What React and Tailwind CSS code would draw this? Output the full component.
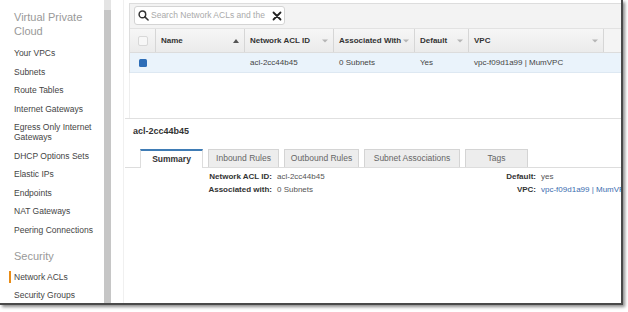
const font = { fontFamily: '"Liberation Sans", Arial, sans-serif' };

function SortArrow({ dark }) {
  return (
    <svg width="6" height="4" viewBox="0 0 6 4" className="shrink-0">
      {dark ? (
        <path d="M0 4 L3 0 L6 4 Z" fill="#555" />
      ) : (
        <path d="M0 0.5 L6 0.5 L3 3.5 Z" fill="#b5b5b5" />
      )}
    </svg>
  );
}

function HeadCell({ label, w, dark }) {
  return (
    <div className={`${w} h-full flex items-center justify-between pl-[5px] pr-[5px] border-r border-[#d6d6d6]`}>
      <span className="font-bold text-[8px] text-[#333]">{label}</span>
      <SortArrow dark={dark} />
    </div>
  );
}

const navTop = ['Your VPCs', 'Subnets', 'Route Tables', 'Internet Gateways'];
const navMid = ['DHCP Options Sets', 'Elastic IPs', 'Endpoints', 'NAT Gateways', 'Peering Connections'];

function NavItem({ children, active }) {
  return (
    <div className="relative h-[18.5px] flex items-center pl-[14px] text-[8.5px] leading-[10px] text-[#444]">
      {active && <span className="absolute left-[9px] top-[3px] w-[1.5px] h-[12px] bg-[#e98c16]" />}
      {children}
    </div>
  );
}

function Tab({ label, w, active }) {
  return active ? (
    <div className={`${w} h-[19px] flex items-center justify-center bg-white border-t-2 border-t-[#3f7cb5] border-x border-x-[#ddd] -mb-px text-[8.5px] font-bold text-[#333]`}>
      {label}
    </div>
  ) : (
    <div className={`${w} h-[18px] flex items-center justify-center bg-[#ededed] border border-[#d4d4d4] border-b-0 text-[8.5px] text-[#666]`}>
      {label}
    </div>
  );
}

export default function App() {
  return (
    <div className="w-[628px] h-[312px] bg-white overflow-hidden" style={font}>
      <div className="w-[623px] h-[305px] flex bg-white border-r-2 border-b-2 border-[#4a4a4a] shadow-[2px_2px_3px_rgba(0,0,0,0.45)] overflow-hidden">
        {/* Sidebar */}
        <aside className="w-[104px] shrink-0 flex flex-col">
          <div className="mt-[10px] pl-[14px] text-[11px] leading-[14px] text-[#999]">
            Virtual Private
            <br />
            Cloud
          </div>
          <div className="mt-[6px] flex flex-col">
            {navTop.map((n) => (
              <NavItem key={n}>{n}</NavItem>
            ))}
            <div className="h-[28.5px] flex flex-col justify-center pl-[14px] text-[8.5px] leading-[10px] text-[#444]">
              <span>Egress Only Internet</span>
              <span>Gateways</span>
            </div>
            {navMid.map((n) => (
              <NavItem key={n}>{n}</NavItem>
            ))}
          </div>
          <div className="mt-[10px] pl-[14px] text-[11px] leading-[14px] text-[#999]">Security</div>
          <div className="mt-[4.5px] flex flex-col">
            <NavItem active>Network ACLs</NavItem>
            <NavItem>Security Groups</NavItem>
          </div>
        </aside>

        {/* Scrollbar */}
        <div className="w-[7px] shrink-0 flex flex-col bg-[#c6c6c6]">
          <div className="h-[10px] bg-[#e4e4e4]" />
        </div>
        <div className="w-[18px] shrink-0 flex">
          <div className="w-[12px]" />
          <div className="w-px bg-[#f0f0f0]" />
        </div>

        {/* Main */}
        <main className="flex-1 min-w-0 flex flex-col">
          <div className="mt-[3px] border-l border-t border-[#ddd] flex flex-col">
            <div className="h-[25px] bg-[#f3f3f3] border-b border-[#e2e2e2] pl-[4px] pt-[2px]">
              <div className="w-[151px] h-[19px] bg-white border border-[#d4d4d4] rounded-[3px] flex items-center pl-[3px] pr-[2px] gap-[2px]">
                <svg width="11" height="11" viewBox="0 0 12 12" fill="none" stroke="#333" strokeWidth="1.6" className="shrink-0">
                  <circle cx="4.8" cy="4.8" r="3.6" />
                  <path d="M7.5 7.5 L11 11" strokeLinecap="round" />
                </svg>
                <span className="flex-1 text-[8.5px] text-[#aaa] whitespace-nowrap">Search Network ACLs and the</span>
                <svg width="10" height="10" viewBox="0 0 10 10" stroke="#222" strokeWidth="1.8" strokeLinecap="round" className="shrink-0">
                  <path d="M1.5 1.5 L8.5 8.5 M8.5 1.5 L1.5 8.5" />
                </svg>
              </div>
            </div>
            <div className="h-[24px] flex bg-gradient-to-b from-[#f6f6f6] to-[#ebebeb] border-b border-[#dcdcdc]">
              <div className="w-[26px] h-full flex items-center justify-center border-r border-[#d6d6d6]">
                <div className="w-[10px] h-[10px] rounded-[2px] border border-[#d8d8d8] bg-[#f7f7f7]" />
              </div>
              <HeadCell label="Name" w="w-[89px]" dark />
              <HeadCell label="Network ACL ID" w="w-[89px]" />
              <HeadCell label="Associated With" w="w-[81px]" />
              <HeadCell label="Default" w="w-[54px]" />
              <HeadCell label="VPC" w="w-[135px]" />
              <div className="flex-1 bg-[#f4f4f4]" />
            </div>
            <div className="h-[20px] flex items-center bg-[#eaf3fb] border-b border-[#dde8f2] text-[8px] text-[#444]">
              <div className="w-[26px] flex justify-center">
                <div className="w-[8px] h-[8px] rounded-[1.5px] bg-[#2d6db7]" />
              </div>
              <div className="w-[89px]" />
              <div className="w-[89px] pl-[5px]">acl-2cc44b45</div>
              <div className="w-[81px] pl-[5px]">0 Subnets</div>
              <div className="w-[54px] pl-[5px]">Yes</div>
              <div className="pl-[5px]">vpc-f09d1a99 | MumVPC</div>
            </div>
          </div>

          <div className="h-[45px] border-l border-[#eee]" />
          <div className="h-px bg-[#e0e0e0] -ml-[4px]" />

          <div className="mt-[7px] pl-[4px] text-[9px] leading-[10px] font-bold text-[#333]">acl-2cc44b45</div>

          <div className="mt-[13px] flex items-end gap-[5px] border-b border-[#ddd] -ml-[4px] pl-[15px]">
            <Tab label="Summary" w="w-[63px]" active />
            <Tab label="Inbound Rules" w="w-[71px]" />
            <Tab label="Outbound Rules" w="w-[75px]" />
            <Tab label="Subnet Associations" w="w-[96px]" />
            <Tab label="Tags" w="w-[63px]" />
          </div>

          <div className="mt-[2px] flex text-[8px] leading-[13px] whitespace-nowrap">
            <div className="w-[143px] shrink-0 flex flex-col items-end font-bold text-[#333]">
              <span>Network ACL ID:</span>
              <span>Associated with:</span>
            </div>
            <div className="w-[220px] shrink-0 pl-[5px] flex flex-col text-[#555]">
              <span>acl-2cc44b45</span>
              <span>0 Subnets</span>
            </div>
            <div className="w-[44px] shrink-0 flex flex-col items-end font-bold text-[#333]">
              <span>Default:</span>
              <span>VPC:</span>
            </div>
            <div className="shrink-0 pl-[5px] flex flex-col">
              <span className="text-[#555]">yes</span>
              <span className="text-[#3a6db0]">vpc-f09d1a99 | MumVPC</span>
            </div>
          </div>
        </main>
      </div>
    </div>
  );
}
